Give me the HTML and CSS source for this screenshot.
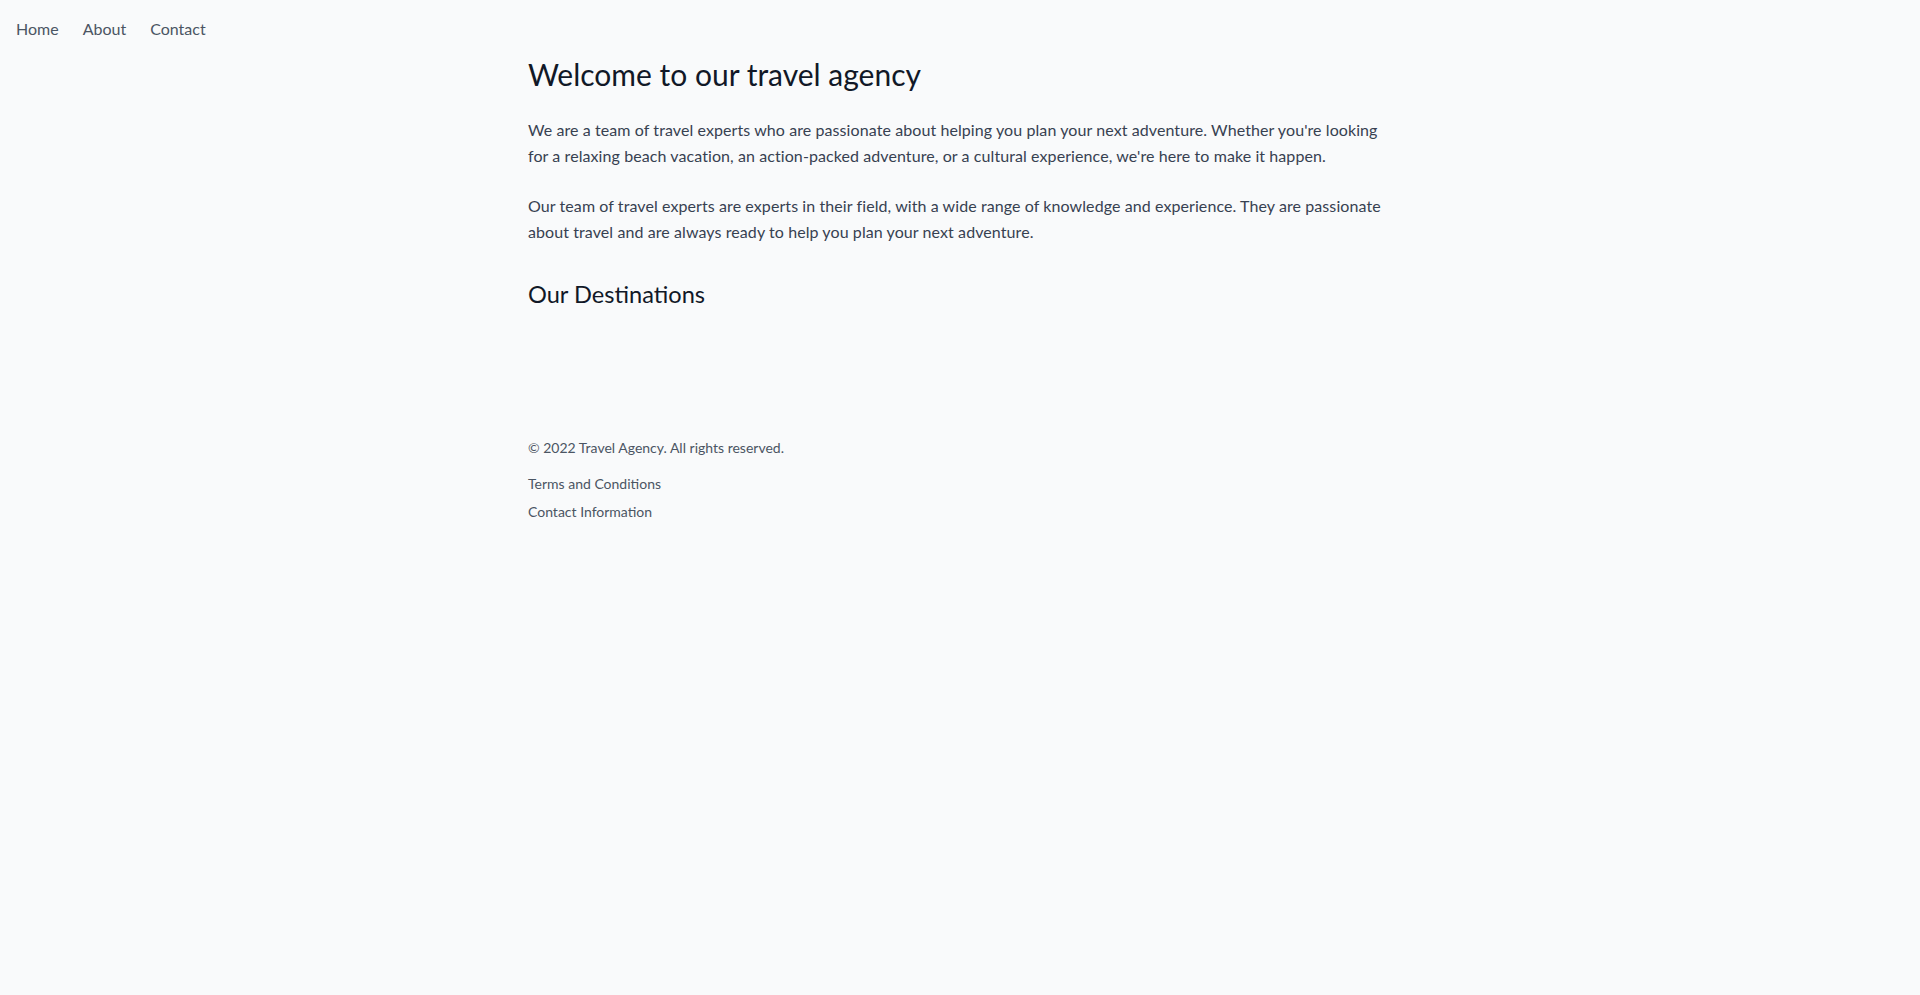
FILE: index.html
```html
<!DOCTYPE html>
<html lang="en">
<head>
<meta charset="utf-8">
<title>Travel Agency</title>
<link rel="stylesheet" href="styles.css">
</head>
<body>
<nav class="topnav">
  <a class="nav-link" href="#">Home</a>
  <a class="nav-link" href="#">About</a>
  <a class="nav-link" href="#">Contact</a>
</nav>
<main class="container">
  <h1 class="title">Welcome to our travel agency</h1>
  <p class="lead">We are a team of travel experts who are passionate about helping you plan your next adventure. Whether you're looking for a relaxing beach vacation, an action-packed adventure, or a cultural experience, we're here to make it happen.</p>
  <p class="lead">Our team of travel experts are experts in their field, with a wide range of knowledge and experience. They are passionate about travel and are always ready to help you plan your next adventure.</p>
  <h2 class="section-title">Our Destinations</h2>
  <div class="destinations"></div>
  <footer class="footer">
    <p class="copyright">© 2022 Travel Agency. All rights reserved.</p>
    <ul class="footer-links">
      <li><a href="#">Terms and Conditions</a></li>
      <li><a href="#">Contact Information</a></li>
    </ul>
  </footer>
</main>
</body>
</html>
```
FILE: styles.css
```css
* { box-sizing: border-box; }
html, body { margin: 0; padding: 0; }
body {
  background: #f9fafb;
  font-family: Lato, "Open Sans", sans-serif;
  color: #374151;
  min-height: 995px;
}
a { color: inherit; text-decoration: none; }

.topnav {
  display: flex;
  gap: 24px;
  padding: 17px 16px 0;
  font-size: 16px;
  line-height: 24px;
  color: #4b5563;
}

.container {
  max-width: 896px;
  margin: 0 auto;
  padding: 15px 16px 0;
}

.title {
  margin: 0;
  font-size: 30px;
  line-height: 36px;
  font-weight: 400;
  color: #111827;
}

.lead {
  margin: 25px 0 0;
  font-size: 16px;
  line-height: 26px;
  letter-spacing: 0.085px;
}
.lead + .lead { margin-top: 24px; }

.section-title {
  margin: 33px 0 0;
  font-size: 23.6px;
  line-height: 32px;
  font-weight: 400;
  color: #111827;
}

.destinations {
  height: 64px;
}

.footer {
  margin-top: 64px;
  font-size: 14px;
  line-height: 20px;
  color: #4b5563;
}
.copyright { margin: 0 0 16px; }
.footer-links {
  list-style: none;
  margin: 0;
  padding: 0;
  display: flex;
  flex-direction: column;
  gap: 8px;
}
```
